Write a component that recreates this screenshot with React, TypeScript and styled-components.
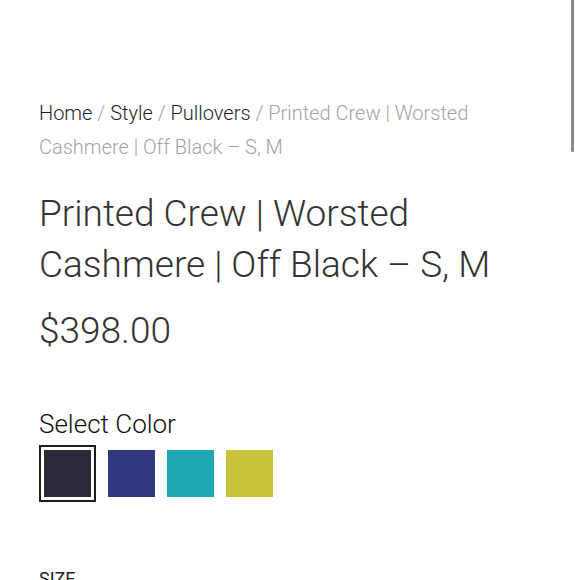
import React from "react";
import styled, { createGlobalStyle } from "styled-components";

const Global = createGlobalStyle`
  html, body { margin: 0; padding: 0; background: #fff; }
  body { font-family: Roboto, "Noto Sans", sans-serif; overflow: hidden; }
  * { box-sizing: border-box; }
`;

const Page = styled.div`
  position: relative;
  width: 580px;
  height: 580px;
  overflow: hidden;
  padding: 96px 40px 0 39px;
  color: #333;
`;

const ScrollThumb = styled.div`
  position: absolute;
  top: 0;
  right: 6px;
  width: 3px;
  height: 152px;
  background: #8a8a8a;
  border-radius: 0 0 2px 2px;
`;

const Breadcrumb = styled.nav`
  font-size: 20px;
  line-height: 34px;
  font-weight: 300;
  color: #a3a3a3;
  margin: 0;
`;

const Crumb = styled.span`
  color: #1f1f1f;
  font-weight: 300;
`;

const Sep = styled.span`
  color: #a3a3a3;
`;

const Title = styled.h1`
  margin: 24px 0 0;
  font-size: 37px;
  line-height: 51px;
  font-weight: 300;
  color: #333;
`;

const Price = styled.div`
  margin-top: 19px;
  font-size: 37px;
  line-height: 44px;
  font-weight: 300;
  color: #333;
`;

const Label = styled.div`
  margin-top: 56px;
  font-size: 26px;
  line-height: 30px;
  font-weight: 300;
  color: #111;
`;

const Swatches = styled.div`
  margin-top: 6px;
  display: flex;
  align-items: center;
  gap: 12px;
`;

const Swatch = styled.div<{ $selected?: boolean }>`
  display: flex;
  padding: ${(p) => (p.$selected ? "3px" : "0")};
  border: ${(p) => (p.$selected ? "2px solid #1e1e1e" : "none")};
`;

const Chip = styled.div<{ $color: string }>`
  width: 47px;
  height: 47px;
  background: ${(p) => p.$color};
`;

const SizeLabel = styled.div`
  margin-top: 65px;
  font-size: 18px;
  line-height: 24px;
  font-weight: 400;
  color: #222;
  text-transform: uppercase;
`;

const colors = ["#2a2b37", "#30387f", "#1fa6b2", "#c8c23c"];

export default function App() {
  return (
    <>
      <Global />
      <Page>
        <ScrollThumb />
        <Breadcrumb>
          <Crumb>Home</Crumb> <Sep>/</Sep> <Crumb>Style</Crumb> <Sep>/</Sep>{" "}
          <Crumb>Pullovers</Crumb> <Sep>/</Sep> Printed Crew | Worsted Cashmere | Off Black – S, M
        </Breadcrumb>
        <Title>Printed Crew | Worsted Cashmere | Off Black – S, M</Title>
        <Price>$398.00</Price>
        <Label>Select Color</Label>
        <Swatches>
          {colors.map((c, i) => (
            <Swatch key={c} $selected={i === 0}>
              <Chip $color={c} />
            </Swatch>
          ))}
        </Swatches>
        <SizeLabel>Size</SizeLabel>
      </Page>
    </>
  );
}
